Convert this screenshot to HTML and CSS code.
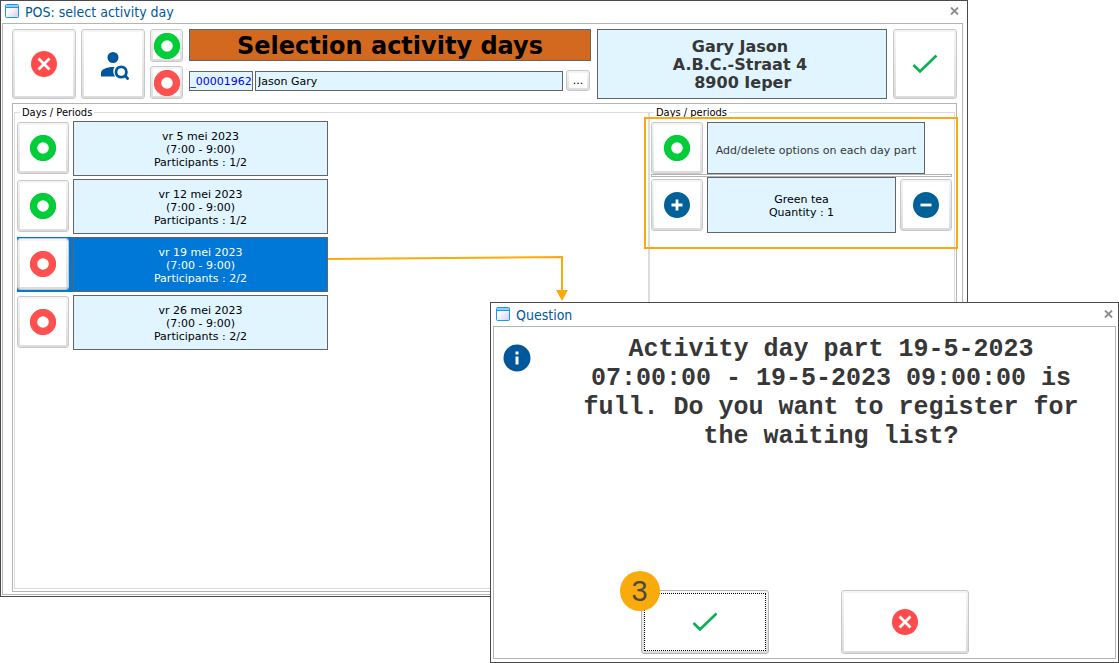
FILE: index.html
```html
<!DOCTYPE html>
<html lang="en">
  <head>
    <meta charset="UTF-8" />
    <meta name="viewport" content="width=device-width, initial-scale=1.0" />
    <title>POS: select activity day</title>
    <link rel="stylesheet" href="styles.css">
  </head>
  <body>
    <!-- Shared icons -->
    <svg class="sprite" aria-hidden="true">
      <linearGradient id="paper" x1="0" y1="0" x2="1" y2="1">
        <stop offset="0.3" stop-color="#fff" />
        <stop offset="1" stop-color="#cfcdf5" />
      </linearGradient>
      <symbol id="window" viewBox="0 0 14 14">
        <rect x="0.5" y="0.5" width="13" height="13" rx="1" fill="url(#paper)" stroke="#1a96f5" />
        <path d="M1 1h12v2H1z" fill="#8fd0ff" />
        <path d="M1 3.5h12" stroke="#1a96f5" />
      </symbol>
      <symbol id="close" viewBox="0 0 9 8">
        <path d="M1 0.5l7 7M8 0.5l-7 7" stroke="#8c8c8c" stroke-width="1.8" />
      </symbol>
      <symbol id="ring" viewBox="0 0 26 26">
        <circle cx="13" cy="13" r="9.5" fill="none" stroke="currentColor" stroke-width="7.4" />
      </symbol>
      <symbol id="cancel" viewBox="0 0 26 26">
        <circle cx="13" cy="13" r="13" fill="#ff4b4b" />
        <path d="M7.5 7.5l11 11M18.5 7.5l-11 11" stroke="#fff" stroke-width="2.8" />
      </symbol>
      <symbol id="check" viewBox="0 0 26 20">
        <path d="M1.5 11l6.500 6.500L24.500 1.500" fill="none" stroke="#04b44e" stroke-width="2.6" />
      </symbol>
      <symbol id="plus" viewBox="0 0 26 26">
        <circle cx="13" cy="13" r="13" fill="#006199" />
        <path d="M13 7.5v11M7.5 13h11" stroke="#fff" stroke-width="2.8" />
      </symbol>
      <symbol id="minus" viewBox="0 0 26 26">
        <circle cx="13" cy="13" r="13" fill="#006199" />
        <path d="M7.5 13h11" stroke="#fff" stroke-width="2.8" />
      </symbol>
      <symbol id="person-search" viewBox="0 0 28 28">
        <circle cx="12" cy="5.500" r="5.500" fill="#00579c" />
        <path d="M0 24.500v-3.500c0-3.500 5.500-6 12-6 0.800 0 1 0 1.500 0.100-1.800 3-1.700 6.400 0.500 9.400z" fill="#00579c" />
        <circle cx="20.200" cy="20" r="5.200" fill="none" stroke="#00579c" stroke-width="2.8" />
        <path d="M24 23.500l3.500 4" stroke="#00579c" stroke-width="2.8" />
      </symbol>
      <symbol id="info" viewBox="0 0 28 28">
        <circle cx="14" cy="14" r="13.5" fill="#00579c" />
        <path d="M12.5 7.5h3v3h-3zM12.5 12.5h3v8h-3z" fill="#fff" />
      </symbol>
    </svg>

    <main class="window main-window">
      <header class="titlebar">
        <svg class="icon-window"><use href="#window" /></svg>
        <h1>POS: select activity day</h1>
        <button type="button" class="close" aria-label="Close">
          <svg><use href="#close" /></svg>
        </button>
      </header>

      <div class="window-body">
        <div class="toolbar">
          <button type="button" class="btn btn-big" aria-label="Cancel">
            <svg class="icon"><use href="#cancel" /></svg>
          </button>
          <button type="button" class="btn btn-big" aria-label="Search person">
            <svg class="icon-person"><use href="#person-search" /></svg>
          </button>
          <div class="small-buttons">
            <button type="button" class="btn green" aria-label="Select all">
              <svg class="icon"><use href="#ring" /></svg>
            </button>
            <button type="button" class="btn red" aria-label="Deselect all">
              <svg class="icon"><use href="#ring" /></svg>
            </button>
          </div>
          <div class="selection">
            <h2>Selection activity days</h2>
            <div class="person">
              <input type="text" class="code" value="_00001962" aria-label="Person number" />
              <input type="text" class="name" value="Jason Gary" aria-label="Person name" />
              <button type="button" class="btn btn-more" aria-label="Browse">...</button>
            </div>
          </div>
          <address class="address">
            Gary Jason<br />
            A.B.C.-Straat 4<br />
            &nbsp;8900 Ieper
          </address>
          <button type="button" class="btn btn-big" aria-label="Confirm">
            <svg class="icon-check"><use href="#check" /></svg>
          </button>
        </div>

        <div class="panels">
          <fieldset class="days">
            <legend>Days / Periods</legend>
            <ul class="day-list">
              <li class="day">
                <button type="button" class="btn btn-row green" aria-label="vr 5 mei 2023">
                  <svg class="icon"><use href="#ring" /></svg>
                </button>
                <p class="cell">vr 5 mei 2023<br />(7:00 - 9:00)<br />Participants : 1/2</p>
              </li>
              <li class="day">
                <button type="button" class="btn btn-row green" aria-label="vr 12 mei 2023">
                  <svg class="icon"><use href="#ring" /></svg>
                </button>
                <p class="cell">vr 12 mei 2023<br />(7:00 - 9:00)<br />Participants : 1/2</p>
              </li>
              <li class="day selected">
                <button type="button" class="btn btn-row red" aria-label="vr 19 mei 2023">
                  <svg class="icon"><use href="#ring" /></svg>
                </button>
                <p class="cell">vr 19 mei 2023<br />(7:00 - 9:00)<br />Participants : 2/2</p>
              </li>
              <li class="day">
                <button type="button" class="btn btn-row red" aria-label="vr 26 mei 2023">
                  <svg class="icon"><use href="#ring" /></svg>
                </button>
                <p class="cell">vr 26 mei 2023<br />(7:00 - 9:00)<br />Participants : 2/2</p>
              </li>
            </ul>
          </fieldset>

          <fieldset class="options">
            <legend>Days / periods</legend>
            <div class="option">
              <button type="button" class="btn btn-row green" aria-label="Options">
                <svg class="icon"><use href="#ring" /></svg>
              </button>
              <p class="cell hint">Add/delete options on each day part</p>
            </div>
            <hr class="divider" />
            <div class="option">
              <button type="button" class="btn btn-row" aria-label="Add">
                <svg class="icon"><use href="#plus" /></svg>
              </button>
              <p class="cell product">Green tea<br />Quantity : 1</p>
              <button type="button" class="btn btn-row" aria-label="Remove">
                <svg class="icon"><use href="#minus" /></svg>
              </button>
            </div>
            <div class="highlight"></div>
          </fieldset>
        </div>
      </div>

      <!-- Arrow from the full day to the question -->
      <svg class="arrow" viewBox="0 0 242 48" aria-hidden="true">
        <path d="M0 5L234 3V38" fill="none" stroke="#faab0c" stroke-width="2" />
        <path d="M228 36h12l-6 11z" fill="#faab0c" />
      </svg>
    </main>

    <section class="window question" role="dialog" aria-labelledby="questionTitle">
      <header class="titlebar">
        <svg class="icon-window"><use href="#window" /></svg>
        <h1 id="questionTitle">Question</h1>
        <button type="button" class="close" aria-label="Close">
          <svg><use href="#close" /></svg>
        </button>
      </header>
      <div class="window-body">
        <div class="message">
          <svg class="icon-info"><use href="#info" /></svg>
          <p>
            Activity day part 19-5-2023 07:00:00 - 19-5-2023 09:00:00 is full. Do
            you want to register for the waiting list?
          </p>
        </div>
        <div class="answers">
          <div class="answer">
            <button type="button" class="btn focused" aria-label="Yes">
              <svg class="icon-check"><use href="#check" /></svg>
            </button>
            <span class="step">3</span>
          </div>
          <div class="answer">
            <button type="button" class="btn" aria-label="No">
              <svg class="icon"><use href="#cancel" /></svg>
            </button>
          </div>
        </div>
      </div>
    </section>
  </body>
</html>
```

FILE: styles.css
```css
* {
  box-sizing: border-box;
}

body {
  position: relative;
  min-height: 100vh;
  margin: 0;
  background: #fff;
  color: #000;
  font-family: Verdana, "DejaVu Sans", sans-serif;
  font-size: 11px;
  line-height: 13px;
}

h1,
h2,
p,
ul {
  margin: 0;
  padding: 0;
}

svg {
  display: block;
  flex: none;
}

.sprite {
  position: absolute;
  width: 0;
  height: 0;
}

/* Windows */
.window {
  position: absolute;
  display: flex;
  flex-direction: column;
  padding: 0 2px 3px;
  border: 1px solid #4a4a4a;
  background: #fff;
}

.main-window {
  top: 0;
  left: 0;
  right: 151px;
  min-height: 597px;
  padding: 0 4px 1px 1px;
}

.question {
  top: 302px;
  right: 0;
  width: 629px;
  min-height: 361px;
}

.titlebar {
  display: flex;
  align-items: center;
  gap: 6px;
  height: 22px;
  padding: 0 4px 2px 3px;
}

.question .titlebar {
  height: 23px;
  padding-right: 3px;
}

.titlebar h1 {
  flex: 1;
  padding-top: 2px;
  color: #00579c;
  font-family: Tahoma, "DejaVu Sans Condensed", "Noto Sans", sans-serif;
  font-size: 14px;
  font-weight: normal;
  line-height: 18px;
}

.icon-window {
  width: 14px;
  height: 14px;
}

.close {
  padding: 0;
  border: none;
  background: none;
}

.close svg {
  width: 9px;
  height: 8px;
}

.window-body {
  flex: 1;
  display: flex;
  flex-direction: column;
  border: 1px solid #b4b4b4;
}

.main-window .window-body {
  padding: 5px 5px 2px 9px;
  gap: 4px;
}

/* Buttons */
.btn {
  display: flex;
  align-items: center;
  justify-content: center;
  flex: none;
  padding: 2px;
  border: 1px solid #c8c8c8;
  border-radius: 3px;
  background: linear-gradient(#fff, #fff) content-box,
    linear-gradient(#f5f5f5, #dcdcdc) padding-box;
}

.btn-big {
  width: 64px;
  height: 70px;
}

.btn-row {
  width: 52px;
  height: 52px;
}

.icon {
  width: 26px;
  height: 26px;
}

.icon-check {
  width: 26px;
  height: 20px;
}

.icon-person {
  width: 28px;
  height: 28px;
  margin: 4px 0 0 3px;
}

.icon-info {
  width: 28px;
  height: 28px;
}

.green {
  color: #00cd37;
}

.red {
  color: #ff5050;
}

/* Toolbar */
.toolbar {
  display: flex;
  gap: 5px;
}

.small-buttons {
  display: flex;
  flex-direction: column;
  justify-content: space-between;
}

.small-buttons .btn {
  width: 33px;
  height: 33px;
}

.selection {
  flex: 1;
  display: flex;
  flex-direction: column;
  gap: 9px;
  min-width: 0;
  margin-left: 1px;
}

.selection h2 {
  height: 32px;
  border: 1px solid #646464;
  background: #d2691e;
  font-size: 24px;
  line-height: 32px;
  text-align: center;
}

.person {
  display: flex;
  align-items: center;
  gap: 2px;
  padding-right: 1px;
}

.person input {
  height: 20px;
  padding: 1px 2px 0;
  border: 1px solid #646464;
  background: #e0f5ff;
  font: inherit;
}

.person .code {
  width: 64px;
  padding: 1px 0 0;
  color: #0000f0;
  text-align: center;
}

.person .name {
  flex: 1;
  min-width: 0;
}

.btn-more {
  width: 24px;
  height: 21px;
  margin-left: 1px;
  font: inherit;
}

.address {
  width: 290px;
  height: 70px;
  margin: 0 1px;
  padding: 8px 4px 0 0;
  border: 1px solid #646464;
  background: #e0f5ff;
  color: #373737;
  font-size: 16px;
  font-style: normal;
  font-weight: bold;
  line-height: 18px;
  text-align: center;
}

/* Panels */
.panels {
  flex: 1;
  display: flex;
  padding: 2px 1px;
  border: 1px solid #b4b4b4;
}

fieldset {
  min-width: 0;
  margin: 0;
  padding: 2px;
  border: 1px solid #dcdcdc;
}

legend {
  margin-left: 3px;
  padding: 0 2px;
  font-family: Tahoma, "DejaVu Sans Condensed", "Noto Sans", sans-serif;
}

.days {
  flex: 1;
}

.options {
  position: relative;
  width: 306px;
  padding: 3px 2px 3px 1px;
}

.day-list {
  display: flex;
  flex-direction: column;
  gap: 3px;
  list-style: none;
}

.day {
  display: flex;
  align-items: center;
  gap: 4px;
  width: 311px;
}

.day .btn {
  margin-bottom: 2px;
}

.cell {
  display: flex;
  align-items: center;
  justify-content: center;
  flex: 1;
  height: 55px;
  padding-top: 2px;
  border: 1px solid #646464;
  background: #e0f5ff;
  text-align: center;
}

.selected,
.selected .cell {
  background: #0078d7;
  color: #fff;
}

.option {
  display: flex;
  align-items: center;
  gap: 4px;
}

.hint {
  flex: none;
  width: 218px;
  height: 52px;
  padding-top: 4px;
  color: #373737;
  white-space: nowrap;
}

.product {
  height: 56px;
}

.divider {
  height: 3px;
  margin: 0;
  border: 1px solid #b4b4b4;
}

.highlight {
  position: absolute;
  top: -2px;
  left: -6px;
  right: -4px;
  height: 132px;
  border: 2px solid #faab0c;
  pointer-events: none;
}

.arrow {
  position: absolute;
  top: 253px;
  left: 327px;
  width: 242px;
  height: 48px;
}

/* Question */
.message {
  display: flex;
  gap: 40px;
  padding: 8px 24px 0 9px;
  color: #373737;
}

.message .icon-info {
  margin-top: 9px;
}

.message p {
  flex: 1;
  font-family: "Courier New", "Liberation Mono", monospace;
  font-size: 25px;
  font-weight: bold;
  line-height: 29px;
  text-align: center;
}

.answers {
  display: flex;
  justify-content: center;
  gap: 72px;
  margin-top: auto;
  padding-bottom: 4px;
}

.answer {
  position: relative;
}

.answer .btn {
  width: 128px;
  height: 64px;
}

.answer .focused {
  border-color: #b4b4b4;
  outline: 1px dotted #000;
  outline-offset: -4px;
}

.step {
  position: absolute;
  top: -19px;
  left: -21px;
  width: 40px;
  height: 40px;
  border-radius: 50%;
  background: #faab0c;
  color: #4a4a4a;
  font-family: Arial, "Liberation Sans", sans-serif;
  font-size: 29px;
  line-height: 41px;
  text-align: center;
}
```
